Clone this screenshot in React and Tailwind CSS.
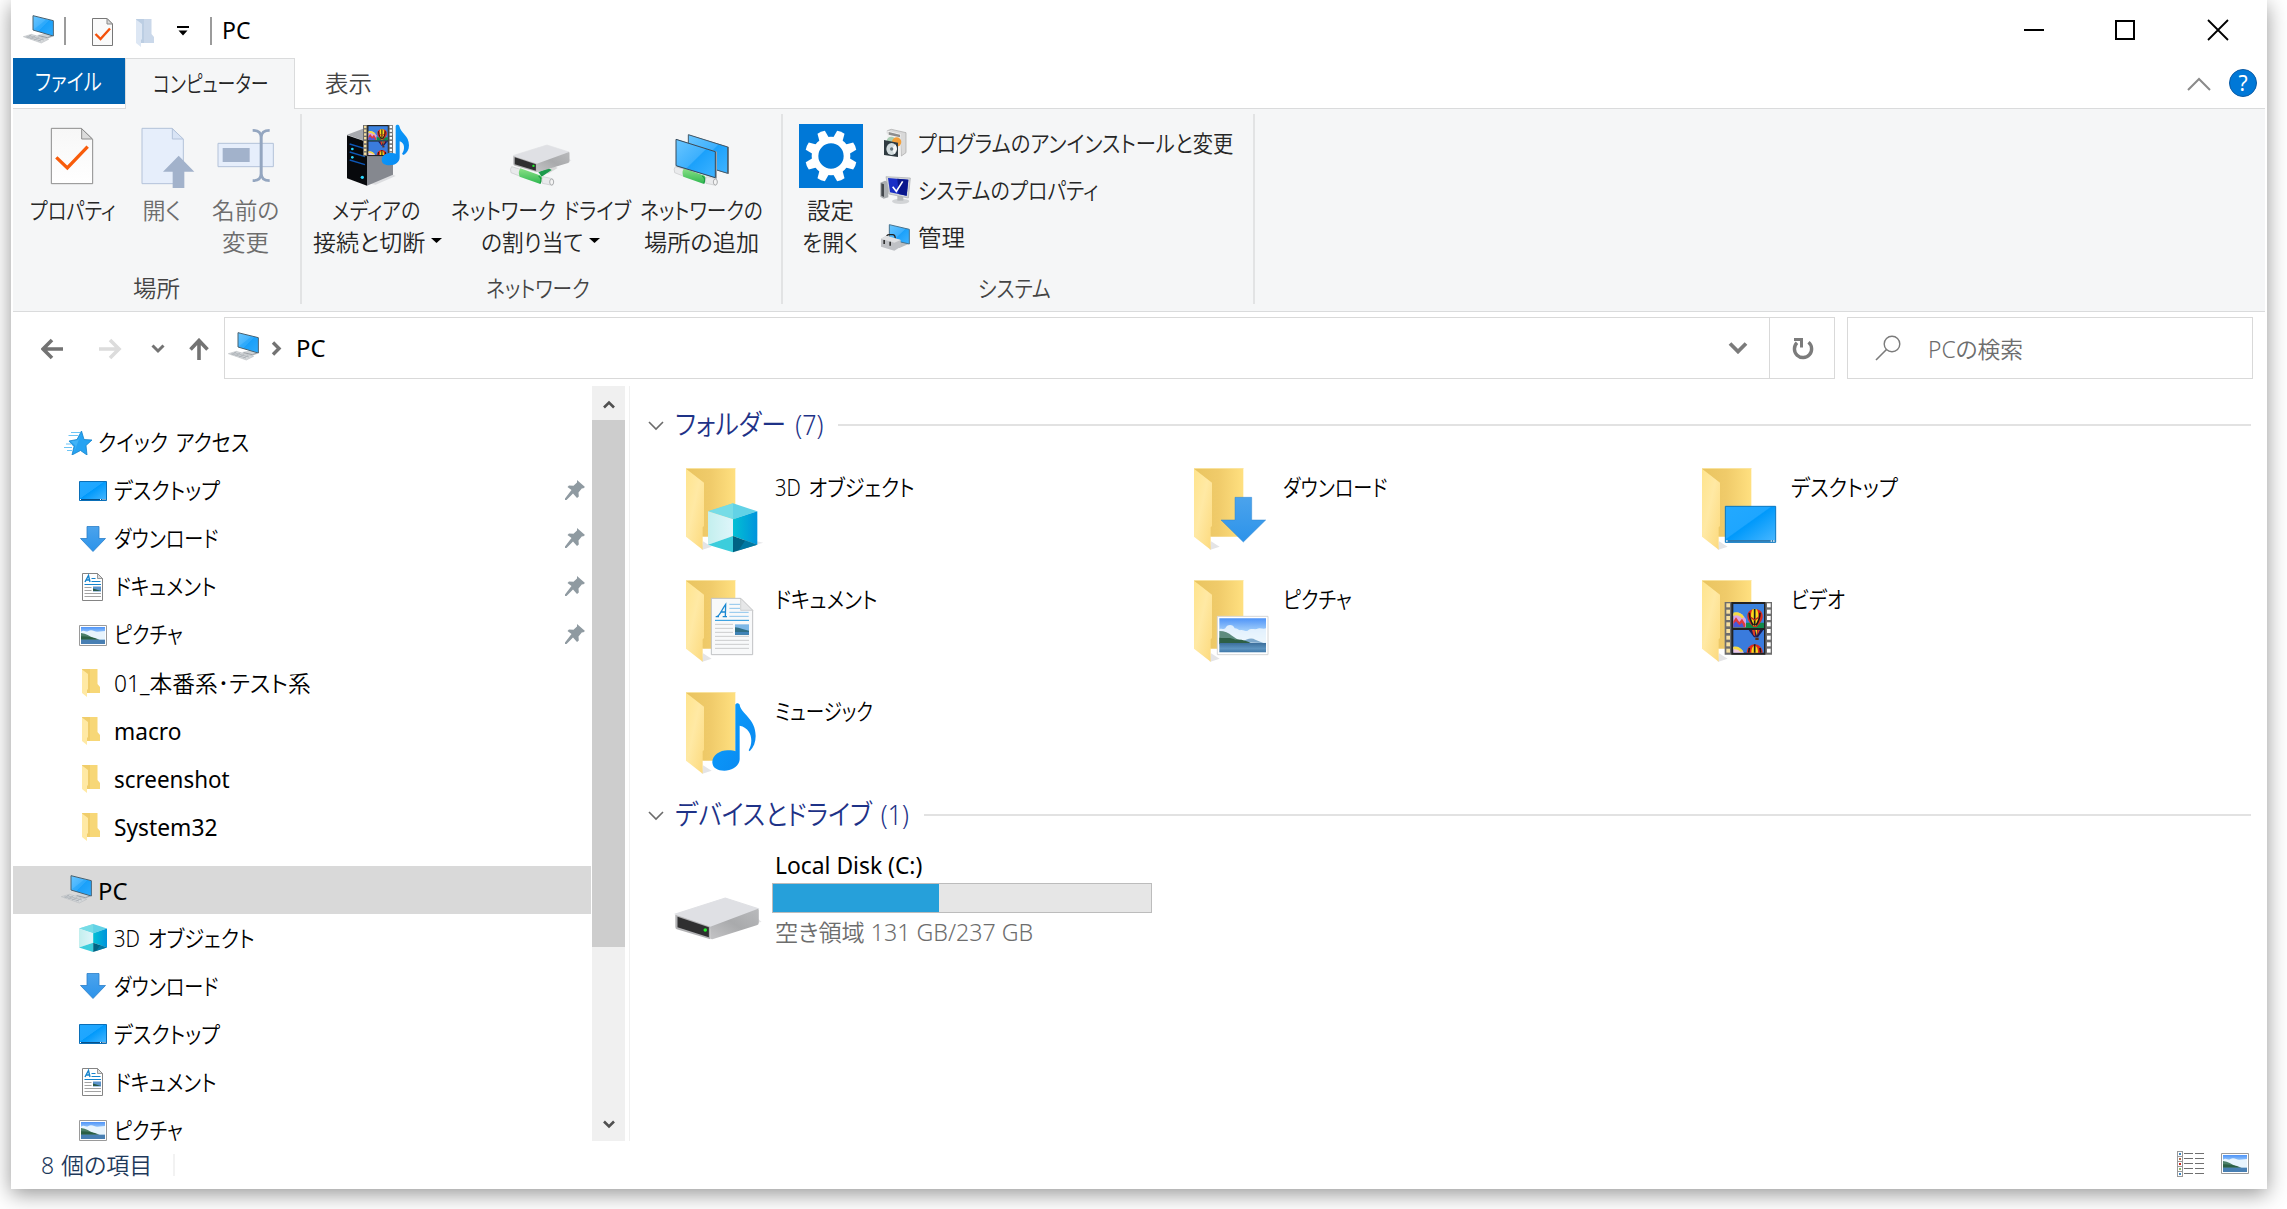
import { useLayoutEffect, useRef } from "react";

/* Text condensed or widened to fill the width of its box. */
function T({ className = "", children }) {
  const box = useRef(null);
  const inner = useRef(null);
  useLayoutEffect(() => {
    const natural = inner.current.offsetWidth;
    if (natural) inner.current.style.transform = `scaleX(${box.current.clientWidth / natural})`;
  }, [children]);
  return (
    <span ref={box} className={"block h-8 shrink-0 leading-[30px] " + className}>
      <span ref={inner} className="inline-block origin-left whitespace-nowrap">{children}</span>
    </span>
  );
}

/* ---------- shared drawings ---------- */

function Gradients() {
  return (
    <svg className="absolute h-0 w-0" aria-hidden="true">
      <defs>
        <linearGradient id="screen" x1="0" y1="0" x2="1" y2="1">
          <stop offset="0" stopColor="#6ac6ff" />
          <stop offset=".5" stopColor="#3db0fd" />
          <stop offset=".52" stopColor="#1ba1fb" />
          <stop offset="1" stopColor="#3fb3ff" />
        </linearGradient>
        <linearGradient id="desk" x1="0" y1="0" x2="1" y2="1">
          <stop offset="0" stopColor="#23a9ff" />
          <stop offset=".45" stopColor="#1ea6ff" />
          <stop offset=".47" stopColor="#0099fb" />
          <stop offset="1" stopColor="#4bb8ff" />
        </linearGradient>
        <linearGradient id="fback" x1="0" y1="0" x2="1" y2="0">
          <stop offset="0" stopColor="#e9c460" />
          <stop offset=".5" stopColor="#f0cb6a" />
          <stop offset="1" stopColor="#ffe080" />
        </linearGradient>
        <linearGradient id="ffront" x1="0" y1="0" x2="1" y2="1">
          <stop offset="0" stopColor="#ffe48d" />
          <stop offset=".45" stopColor="#ffe9a4" />
          <stop offset="1" stopColor="#fcd97c" />
        </linearGradient>
        <linearGradient id="sky" x1="0" y1="0" x2="0" y2="1">
          <stop offset="0" stopColor="#4f94f8" />
          <stop offset=".45" stopColor="#b5dcfb" />
          <stop offset=".7" stopColor="#e3f3fd" />
        </linearGradient>
        <linearGradient id="lake" x1="0" y1="0" x2="0" y2="1">
          <stop offset="0" stopColor="#3c6f9c" />
          <stop offset=".6" stopColor="#5d94c0" />
          <stop offset="1" stopColor="#3f78a8" />
        </linearGradient>
        <linearGradient id="cubeL" x1="0" y1="0" x2="1" y2="0">
          <stop offset="0" stopColor="#c3efee" />
          <stop offset="1" stopColor="#dff5fa" />
        </linearGradient>
        <linearGradient id="cubeR" x1="0" y1="0" x2="1" y2="0">
          <stop offset="0" stopColor="#02c0d4" />
          <stop offset="1" stopColor="#0093dc" />
        </linearGradient>
        <linearGradient id="arrow" x1="0" y1="0" x2="0" y2="1">
          <stop offset="0" stopColor="#4ba3ec" />
          <stop offset="1" stopColor="#2c93ea" />
        </linearGradient>
        <linearGradient id="diskSide" x1="0" y1="1" x2="1" y2="0">
          <stop offset="0" stopColor="#c4c4c6" />
          <stop offset=".5" stopColor="#a9aaac" />
          <stop offset="1" stopColor="#b9babc" />
        </linearGradient>
        <linearGradient id="note" x1="0" y1="0" x2="1" y2="1">
          <stop offset="0" stopColor="#0ba0ff" />
          <stop offset="1" stopColor="#0a86ee" />
        </linearGradient>
        <linearGradient id="paper" x1="0" y1="0" x2="0" y2="1">
          <stop offset="0" stopColor="#f7f7f7" />
          <stop offset="1" stopColor="#ffffff" />
        </linearGradient>
        <linearGradient id="green" x1="0" y1="0" x2="0" y2="1">
          <stop offset="0" stopColor="#8be086" />
          <stop offset="1" stopColor="#2fb850" />
        </linearGradient>
      </defs>
    </svg>
  );
}

function PcIcon({ className = "" }) {
  return (
    <svg className={"h-8 w-[34px] shrink-0 " + className} viewBox="66 42 102 96">
      <path d="M112 105l30-6 16 6v5l-17 7-26-6z" fill="#cfd3d6" />
      <path d="M116 107l26 6 14-5" fill="none" stroke="#9ba0a5" strokeWidth="3" />
      <path d="M70 110l24-7 52 15-22 11z" fill="#d5d8da" stroke="#b2b6ba" strokeWidth="1.5" />
      <path d="M79 110l44 13M87 107l45 13M94 105l-14 8M106 108l-15 8M118 112l-16 8M130 115l-15 8" stroke="#a5abb0" strokeWidth="2" />
      <path d="M99 47l61 15v46l-61-18z" fill="url(#screen)" stroke="#47606f" strokeWidth="3" />
      <path d="M102 88l38-30 18 6v42z" fill="#199ff8" opacity=".45" />
    </svg>
  );
}

function CheckDoc({ className }) {
  return (
    <svg className={className} viewBox="150 381 132 174">
      <path d="M154 385h90l34 33v133H154z" fill="url(#paper)" stroke="#8c8c8c" strokeWidth="3" />
      <path d="M245 386v31h32z" fill="#dcdcdc" stroke="#8c8c8c" strokeWidth="3" />
      <path d="M169 472l33 32 61-64" fill="none" stroke="#f85c0b" strokeWidth="10" />
    </svg>
  );
}

function MiniCheckDoc() {
  return (
    <svg className="h-[30px] w-[23px] shrink-0" viewBox="0 0 23 30">
      <path d="M1.5 1.5h14.5l5.500 5.500v21.500h-20z" fill="#fafafa" stroke="#777" />
      <path d="M16 1.500v5.500h5.500z" fill="#d9d9d9" stroke="#888" />
      <path d="M4.500 17l5 5L19 11.500" fill="none" stroke="#f4510b" strokeWidth="2.400" />
    </svg>
  );
}

function SmallFolder({ className = "", pale }) {
  return (
    <svg className={"shrink-0 " + className} viewBox="0 0 18 28">
      <path d="M0 0h15.500v15l2.500 3v6H0z" fill={pale ? "#cad8ea" : "#f7d777"} />
      <path d="M0 0h8v24H4z" fill={pale ? "#bccee3" : "#f0cd6b"} />
      <path d="M0 0.500l6 4.500v15l-1 1v7L0 24z" fill={pale ? "#dde7f4" : "#ffe9a4"} />
    </svg>
  );
}

/* Landscape picture on a 150 x 115 field */
function Landscape() {
  return (
    <g>
      <path d="M0 0h152v115H0z" fill="#fff" stroke="#d6d6d6" strokeWidth="3" />
      <path d="M6 6h140v102H6z" fill="url(#sky)" />
      <path d="M6 38c10-3 12 3 18-2 4-13 24-14 28 0 8 0 10 4 16 6 8-4 14 4 22 2 10-10 20-4 28-6 10-6 18 2 28-2v40H6z" fill="#eef7fd" opacity=".85" />
      <path d="M74 78c14-12 30-14 40-8l24 10z" fill="#7ea9cc" />
      <path d="M6 44c16 0 28 6 38 14 8 4 14 12 24 14l-20 12H6z" fill="#5d8c7e" />
      <path d="M6 64c20 2 34-2 48 6 18-2 36 4 50 12H6z" fill="#2d5f45" />
      <path d="M6 80h140v28H6z" fill="url(#lake)" />
    </g>
  );
}

function PictureSmall({ className = "" }) {
  return (
    <svg className={"h-[21px] w-7 shrink-0 " + className} viewBox="0 0 84 63">
      <path d="M1.500 1.500h81v60h-81z" fill="#fff" stroke="#9a9a9a" strokeWidth="3" />
      <path d="M6 6h72v51H6z" fill="url(#sky)" />
      <path d="M6 20c10-8 16 4 22-2 12-6 20 4 28 2l22-2v24H6z" fill="#e8f4fd" />
      <path d="M6 24c16 2 26 10 36 14l14 6H6z" fill="#4c7f69" />
      <path d="M6 34c20 0 36 2 56 10H6z" fill="#2b5f44" />
      <path d="M6 44h72v13H6z" fill="#487fb3" />
    </svg>
  );
}

function DesktopSmall() {
  return (
    <svg className="h-5 w-7 shrink-0" viewBox="0 0 28 20">
      <path d="M.5.5h27v19H.5z" fill="url(#desk)" stroke="#0a6fb8" />
      <path d="M1 18h26v1H1z" fill="#07508a" />
      <path d="M1 18h1v1H1zM21 18h1v1h-1zM23.500 18h1v1h-1zM25.500 18h1v1h-1z" fill="#fff" />
    </svg>
  );
}

function DownloadSmall() {
  return (
    <svg className="h-[27px] w-7 shrink-0" viewBox="0 0 28 27">
      <path d="M8 .5h12v12h6.500L14 25.500 1.500 12.500H8z" fill="url(#arrow)" stroke="#2b7fc9" strokeWidth=".8" />
    </svg>
  );
}

function DocSmall() {
  return (
    <svg className="h-7 w-7 shrink-0" viewBox="0 0 28 28">
      <path d="M3.500.5h15l5 5v22h-20z" fill="#fff" stroke="#848484" />
      <path d="M18.500.5v5h5z" fill="#ddd" stroke="#848484" strokeWidth=".8" />
      <path d="M6 9l3.500-6.500L11 9M7 7h4" fill="none" stroke="#1583cc" strokeWidth="1.400" />
      <path d="M12.500 5.500h4M12.500 8.500h9M5.500 11.500h16.500" stroke="#1583cc" strokeWidth="1.200" />
      <path d="M5.500 14.500h7M5.500 17.500h7M5.500 20.500h16.500M5.500 23.500h16.500" stroke="#a3a3a3" />
      <path d="M14 13.500h8v5h-8z" fill="#5a93cb" />
      <path d="M14 15.500l8 2.500h-8z" fill="#2a5a48" />
    </svg>
  );
}

/* Cube on the 3x canvas used by the folder drawings */
function Cube() {
  return (
    <g>
      <path d="M339 340l73 24-73 24-75-24z" fill="#62d2e6" />
      <path d="M339 340v48l-75-24z" fill="#7fe0e6" opacity=".7" />
      <path d="M264 364l75 24v50l-75 26z" fill="url(#cubeL)" />
      <path d="M339 388l73-24v100l-73-26z" fill="url(#cubeR)" />
      <path d="M264 464l75-26v49z" fill="#3ccddc" />
      <path d="M412 464l-73-26v49z" fill="#006384" />
      <path d="M412 464l-36-13-20 30z" fill="#0082b0" opacity=".7" />
    </g>
  );
}

function CubeSmall() {
  return (
    <svg className="h-7 w-7 shrink-0" viewBox="264 340 148 147" preserveAspectRatio="none">
      <Cube />
    </svg>
  );
}

function Star() {
  return (
    <svg className="h-6 w-7 shrink-0" viewBox="0 0 28 24">
      <path d="M17.500 0l2.500 8.500 8 .5-6 5.500 1 9.500-6.500-4.500-8.500 4.500 2-8.500-5-5.500 8-1.500z" fill="#27a3f2" stroke="#1283cc" strokeWidth=".8" />
      <path d="M17.500 2l-3.500 7-7 1.300 4.500 4.500-1.500 6.500z" fill="#5cc3fb" opacity=".5" />
      <path d="M7 1.500h9M4.500 4.500h10M2 13h5M0 16.500h8M3 19.500h5" stroke="#6cc4f5" strokeWidth="1" />
    </svg>
  );
}

function Pin() {
  return (
    <svg className="mb-[2px] h-5 w-5 shrink-0" viewBox="0 0 20 20">
      <path d="M12 0l8 7-2 1.500-1-.3-3.500 4.300.3 4-1.800 1.500-4-4.500L1.500 20H0v-1.500L6.500 10 2.500 7 4 5.500l4.500.3L12 2.500z" fill="#8f9aa1" />
    </svg>
  );
}

/* Film strip with balloons on a 142 x 158 field */
function Film() {
  const holes = [4, 23, 42, 61, 81, 101, 121, 140];
  return (
    <g>
      <path d="M0 0h142v158H0z" fill="#6d6d6d" />
      <path d="M20 0h102v158H20z" fill="#222" />
      {holes.map((y) => (
        <g key={y}>
          <rect x="5" y={y} width="11" height="12" fill="#f6dfa0" />
          <rect x="127" y={y} width="11" height="12" fill="#fff" />
        </g>
      ))}
      <path d="M26 6h92v72H26z" fill="#3b82de" />
      <path d="M26 84h92v68H26z" fill="#3a7bdd" />
      <path d="M60 62h58v16H26V68z" fill="#128a4b" />
      <path d="M26 36c14-10 26-4 38 16v24H26z" fill="#d8a4e4" />
      <path d="M26 32c14-4 24 2 32 12l-6 6c-8-10-16-12-26-8z" fill="#f3dc45" />
      <path d="M26 58l8-12 10 14 8-10 10 16v10H26z" fill="#df3a3c" />
      <path d="M26 66l8-8 10 12 8-8 6 14H26z" fill="#4859d8" />
      <path d="M68 42c0-28 46-28 46 0 0 14-10 24-18 33h-10c-8-9-18-19-18-33z" fill="#e0291d" />
      <path d="M84 22c-7 8-7 34 2 50h8c9-16 9-42 2-50-4-2-8-2-12 0z" fill="#f9d91c" />
      <path d="M90 21v50M74 32c0 12 4 26 12 38M106 32c0 12-4 26-12 38" fill="none" stroke="#1b1b1b" strokeWidth="5" />
      <path d="M78 46l12 8 12-8" fill="none" stroke="#c2261c" strokeWidth="4" />
      <path d="M72 84h44l-16 22h-12z" fill="#1c1c50" />
      <path d="M82 84h8l2 20-6-6zM98 84h8l-8 16z" fill="#e33b26" />
      <path d="M92 84h5l-1 18z" fill="#f9d91c" />
      <path d="M92 107h10v7H92z" fill="#5b2f16" />
      <path d="M26 136c12-4 22 2 32 16H26z" fill="#f0c8e0" />
      <path d="M26 134c14-2 22 4 30 14l-8 2c-6-6-12-10-22-8z" fill="#f3dc45" />
      <path d="M66 152c2-34 46-34 48 0z" fill="#e0291d" />
      <path d="M80 152c0-28 20-28 20 0z" fill="#f9d91c" />
      <path d="M90 127v25M74 138l-2 14M106 138l2 14" stroke="#1b1b1b" strokeWidth="5" />
    </g>
  );
}

function BigFolder({ kind }) {
  return (
    <svg className="h-[86px] w-20 shrink-0" viewBox="198 234 240 258">
      <path d="M245 480l30-10-26-16z" fill="#e4e4e6" />
      {kind === "cube" && <path d="M408 464l22-6-20-4z" fill="#e8e8ea" />}
      <path d="M198 234h148v206h-98l-50-20z" fill="url(#fback)" />
      <path d="M198 235h148" stroke="#fbe7a9" strokeWidth="3" />
      <path d="M198 236l54 42v130l-4 4v67l-50-39z" fill="url(#ffront)" />
      {kind === "cube" && <Cube />}
      {kind === "download" && (
        <path transform="translate(96 150)" d="M225 172h50v68h42l-67 66-67-66h42z" fill="url(#arrow)" stroke="#2f86d3" strokeWidth="1.500" />
      )}
      {kind === "desktop" && (
        <g transform="translate(102 150)">
          <path d="M166 199h151v108H166z" fill="url(#desk)" stroke="#0a76c0" strokeWidth="3" />
          <path d="M168 300h148v5H168z" fill="#2f78ad" />
          <path d="M168 301h5v4h-5zM302 301h4v4h-4zM309 301h5v4h-5z" fill="#d8ecfa" />
        </g>
      )}
      {kind === "doc" && (
        <g transform="translate(0 -336)">
          <path d="M274 625h88l36 36v133H274z" fill="#f8f9fa" stroke="#bfc1c3" strokeWidth="3" />
          <path d="M362 625v36h36z" fill="#e6e7e8" stroke="#bfc1c3" strokeWidth="2" />
          <path d="M289 680c10 0 14-18 28-37l-1 37m-8 0h13m-34 0h10m4-14h16" fill="none" stroke="#1a88d2" strokeWidth="4" />
          <path d="M328 643h32M328 655h32M328 667h58M328 679h58" stroke="#8cc4ec" strokeWidth="3" />
          <path d="M285 691h102" stroke="#1a92dc" strokeWidth="3" />
          <path d="M285 703h54M285 715h54M285 727h54M285 739h102M285 751h102M285 763h102M285 775h102" stroke="#cbcccd" strokeWidth="3" />
          <path d="M345 703h42v31h-42z" fill="#7db7e6" />
          <path d="M345 712c14 0 26 8 42 10v12h-42z" fill="#2f6e86" />
          <path d="M345 726h42v8h-42z" fill="#3f83b8" />
        </g>
      )}
      {kind === "picture" && (
        <g transform="translate(268 343)">
          <Landscape />
        </g>
      )}
      {kind === "video" && (
        <g transform="translate(266 300)">
          <Film />
        </g>
      )}
      {kind === "music" && (
        <path
          transform="translate(0 -672)"
          d="M346 944c2-6 10-6 13 0 4 28 48 40 48 94 0 18-6 34-18 46l-3-3c14-22 12-66-27-74v100c0 20-22 35-46 35-20 0-36-8-36-26 0-22 26-37 50-35 8 0 14 1 19 3z"
          fill="url(#note)"
        />
      )}
    </svg>
  );
}

/* Drive on the 3x canvas: 230 x 126 field */
function Drive() {
  return (
    <g>
      <path d="M218 76l24-4-10-10z" fill="#e6e6e8" />
      <path d="M0 48L140 0l92 32-135 60z" fill="#dfe0e4" stroke="#dfe0e4" strokeWidth="3" />
      <path d="M98 86L232 32q3 2 2 8v34q0 6-6 8L104 124q-6 0-6-4z" fill="url(#diskSide)" />
      <path d="M0 50l98 36v38L4 94q-4-2-4-8z" fill="#b1b1b3" />
      <path d="M6 56l88 32v30L6 88z" fill="#2f2f30" />
      <circle cx="84" cy="96" r="5" fill="#23ef2b" />
    </g>
  );
}

function Pipe({ tee }) {
  return (
    <g>
      {tee && <path d="M770 212l22-14 10 6-30 18z" fill="#d7d7d7" />}
      {tee && <path d="M744 216l30-12 10 6-30 20z" fill="#1c9a4c" />}
      <path d="M664 200q-6 6-2 18l28 11 4-20z" fill="#e9eaec" stroke="#c5c7c9" strokeWidth="2" />
      <path d="M690 205l62 22q8 10-4 24l-60-21q-6-14 2-25z" fill="url(#green)" />
      <path d="M745 228q12 8 4 23" fill="none" stroke="#1d9a45" strokeWidth="4" />
      <path d="M758 230l28 6q8 8 0 20l-30-6q-4-12 2-20z" fill="#e9eaec" stroke="#c5c7c9" strokeWidth="2" />
      <ellipse cx="784" cy="246" rx="6" ry="9" fill="#f4f4f4" stroke="#aeb0b2" strokeWidth="3" />
    </g>
  );
}

function OpenIcon() {
  return (
    <svg className="h-16 w-16" viewBox="391 372 192 192">
      <path d="M424 385h90l34 33v133H424z" fill="#e6eefb" stroke="#b3c2d9" strokeWidth="3" />
      <path d="M515 386v31h33z" fill="#d9e4f5" stroke="#b3c2d9" strokeWidth="3" />
      <path d="M534 467l47 48h-30v49h-35v-49h-29z" fill="#a2b2cb" />
    </svg>
  );
}

function RenameIcon() {
  return (
    <svg className="h-16 w-16" viewBox="640 372 192 192">
      <path d="M655 430h166v70H655z" fill="#e6eefb" stroke="#b3c2d9" strokeWidth="3" />
      <path d="M669 444h81v42h-81z" fill="#a2b2cb" />
      <path d="M759 391c16 0 25 5 25 20v110c0 15-9 21-25 21M810 391c-16 0-25 5-25 20v110c0 15 9 21 25 21" fill="none" stroke="#94a6c0" strokeWidth="8" />
    </svg>
  );
}

function MediaIcon() {
  return (
    <svg className="h-16 w-16" viewBox="165 72 192 192">
      <path d="M228 250l78-26 8 4-60 26z" fill="#dcdde0" />
      <path d="M168 104l60-22 78 22-76 22z" fill="#a7a9ae" />
      <path d="M168 106l60 20v131l-60-22z" fill="#07090c" />
      <path d="M228 126l78-22v120l-78 33z" fill="#85888f" />
      <path d="M176 132l46 14M176 156l46 14M176 180l46 14" stroke="#0d56b4" strokeWidth="4" />
      <circle cx="184" cy="147" r="4" fill="#2ad7ff" />
      <circle cx="184" cy="172" r="4" fill="#2ad7ff" />
      <circle cx="214" cy="232" r="5" fill="#2ad7ff" />
      <g transform="translate(216 75) scale(.63 .59)">
        <Film />
      </g>
      <path d="M314 78c2-5 9-5 11 0 4 22 29 28 29 58 0 14-6 23-16 29l-5-3c10-14 8-34-7-38v48c0 14-12 24-30 24-14 0-24-6-24-17 0-14 16-22 32-20 4 0 7 1 10 2z" fill="url(#note)" />
    </svg>
  );
}

function NetDriveIcon() {
  return (
    <svg className="h-16 w-16" viewBox="656 72 192 192">
      <Pipe tee />
      <g transform="translate(669 135) scale(.72 .655)">
        <Drive />
      </g>
    </svg>
  );
}

function NetPlaceIcon() {
  return (
    <svg className="h-16 w-16" viewBox="1140 72 192 192">
      <g transform="translate(495 0)">
        <Pipe />
      </g>
      <path d="M1200 104l120 37v81l-120-36z" fill="#7f858a" />
      <path d="M1198 104l118 37v79l-118-36z" fill="url(#screen)" stroke="#42596a" strokeWidth="3" />
      <path d="M1164 118l120 37v81l-120-36z" fill="#9fa4a8" />
      <path d="M1161 118l118 37v78l-118-36z" fill="url(#screen)" stroke="#354a5c" strokeWidth="3" />
    </svg>
  );
}

function SettingsIcon() {
  const teeth = [22.5, 67.5, 112.5, 157.5, 202.5, 247.5, 292.5, 337.5];
  return (
    <svg className="h-16 w-16" viewBox="0 0 192 192">
      <path d="M0 0h192v192H0z" fill="#0078d7" />
      <circle cx="96" cy="96" r="48" fill="none" stroke="#fff" strokeWidth="20" />
      {teeth.map((a) => (
        <path key={a} transform={`rotate(${a} 96 96)`} d="M81 42l3-23q12-3 24 0l3 23z" fill="#fff" />
      ))}
    </svg>
  );
}

function UninstallIcon() {
  return (
    <svg className="h-8 w-8 shrink-0" viewBox="297 84 96 96">
      <path d="M322 92l12-4 44 10v60l-14 10-4-62-38-6z" fill="#d9d9d9" stroke="#a5a5a5" strokeWidth="2" />
      <path d="M322 92l40 10v66l-40-6z" fill="#f1f1f1" />
      <path d="M326 96l34 8v8l-34-8z" fill="#8d8d8d" />
      <circle cx="334" cy="124" r="14" fill="#a9cdb2" />
      <circle cx="350" cy="126" r="14" fill="#f3a03a" />
      <path d="M312 120l42 8v43l-42-6z" fill="#2f3a40" />
      <ellipse cx="335" cy="147" rx="16" ry="18" fill="#d3dcde" />
      <path d="M335 147l12-14 4 14-8 14z" fill="#fff" opacity=".8" />
      <circle cx="335" cy="147" r="5" fill="#66757b" />
    </svg>
  );
}

function SystemIcon() {
  return (
    <svg className="h-8 w-8 shrink-0" viewBox="297 227 96 96">
      <path d="M301 250l14-6 10 4v46l-14 4-10-6z" fill="#a9adb0" />
      <path d="M304 252l8 3v38l-8-4z" fill="#44484c" />
      <ellipse cx="362" cy="306" rx="26" ry="8" fill="#d2d4d6" />
      <path d="M352 288h18v16h-18z" fill="#b7babd" />
      <path d="M318 232l73 4-6 60-58-12z" fill="#d5d7d9" stroke="#a8abad" strokeWidth="2" />
      <path d="M324 236l61 5-5 48-50-10z" fill="#1a2fc6" />
      <path d="M352 238l33 3-5 48-24-5z" fill="#0a178c" />
      <path d="M338 262l11 14 19-30" fill="none" stroke="#fff" strokeWidth="5" />
    </svg>
  );
}

function ManageIcon() {
  return (
    <svg className="h-8 w-8 shrink-0" viewBox="297 366 96 96">
      <path d="M340 428l46-4v8l-28 12z" fill="#b9bdc0" />
      <path d="M328 374l60 14v44l-60-14z" fill="url(#screen)" stroke="#46738f" strokeWidth="3" />
      <path d="M318 416q0-12 10-12h10q8 0 8 14" fill="none" stroke="#222" strokeWidth="4" />
      <path d="M303 416l16-9 43 13v20l-19 12-40-12z" fill="#bfc1c5" />
      <path d="M303 416l40 12 19-8-43-13z" fill="#dfe0e2" />
      <path d="M310 420h5v12h-5zM328 425h5v12h-5z" fill="#333" />
    </svg>
  );
}

function Chevron({ className, d = "M1 2l7 7 7-7", box = "0 0 16 11", width = 2, stroke = "#7b7b7b" }) {
  return (
    <svg className={"shrink-0 " + className} viewBox={box}>
      <path d={d} fill="none" stroke={stroke} strokeWidth={width} />
    </svg>
  );
}

const Caret = () => (
  <svg className="mb-[5px] h-[5px] w-[11px] shrink-0" viewBox="0 0 11 5">
    <path d="M0 0h11L5.500 5z" fill="#000" />
  </svg>
);

/* ---------- ribbon ---------- */

function BigButton({ className, icon, children }) {
  return (
    <div className={"flex shrink-0 flex-col items-center " + className}>
      <div className="mb-[7px] flex h-16 w-16 items-center justify-center">{icon}</div>
      {children}
    </div>
  );
}

function Ribbon() {
  return (
    <div className="flex h-[204px] border-y border-[#dadbdc] bg-[#f5f6f7] pt-[5px] text-[#262626]">
      <section className="h-[190px] w-[289px] shrink-0 border-r-2 border-[#e2e3e4]">
        <div className="flex h-[159px] pl-[14px] pt-[10px]">
          <BigButton className="w-[90px]" icon={<CheckDoc className="h-[58px] w-11" />}>
            <T className="ml-px w-[86px]">プロパティ</T>
          </BigButton>
          <BigButton className="ml-[14px] w-[60px] text-[#6d6d6d]" icon={<div className="ml-1"><OpenIcon /></div>}>
            <T className="ml-[2px] w-[39px]">開く</T>
          </BigButton>
          <BigButton className="ml-[17px] w-[74px] text-[#6d6d6d]" icon={<RenameIcon />}>
            <T className="w-[67px]">名前の</T>
            <T className="w-[47px]">変更</T>
          </BigButton>
        </div>
        <div className="flex justify-center text-[#444]">
          <T className="mr-px w-[47px]">場所</T>
        </div>
      </section>
      <section className="h-[190px] w-[481px] shrink-0 border-r-2 border-[#e2e3e4]">
        <div className="flex h-[159px] pl-[6px] pt-[10px]">
          <BigButton className="w-[139px]" icon={<MediaIcon />}>
            <T className="mr-[3px] w-[88px]">メディアの</T>
            <div className="flex items-center gap-[6px]">
              <T className="w-[112px]">接続と切断</T>
              <Caret />
            </div>
          </BigButton>
          <BigButton className="w-[187px]" icon={<NetDriveIcon />}>
            <T className="w-[180px]">ネットワーク ドライブ</T>
            <div className="flex items-center gap-[6px]">
              <T className="w-[102px]">の割り当て</T>
              <Caret />
            </div>
          </BigButton>
          <BigButton className="ml-px w-[132px]" icon={<NetPlaceIcon />}>
            <T className="w-[123px]">ネットワークの</T>
            <T className="w-[115px]">場所の追加</T>
          </BigButton>
        </div>
        <div className="flex justify-center pr-[7px] text-[#444]">
          <T className="w-[104px]">ネットワーク</T>
        </div>
      </section>
      <section className="h-[190px] w-[472px] shrink-0 border-r-2 border-[#e2e3e4]">
        <div className="flex h-[159px] pl-[10px]">
          <BigButton className="w-[76px] pt-[10px]" icon={<SettingsIcon />}>
            <T className="mr-[2px] w-[47px]">設定</T>
            <T className="mr-px w-[57px]">を開く</T>
          </BigButton>
          <div className="ml-[10px] flex flex-col pt-[6px]">
            <div className="flex h-[47px] items-center gap-[7px]">
              <UninstallIcon />
              <T className="w-[315px]">プログラムのアンインストールと変更</T>
            </div>
            <div className="flex h-[47px] items-center gap-[7px]">
              <SystemIcon />
              <T className="w-[180px]">システムのプロパティ</T>
            </div>
            <div className="flex h-[47px] items-center gap-[7px]">
              <ManageIcon />
              <T className="w-[47px]">管理</T>
            </div>
          </div>
        </div>
        <div className="flex justify-center pr-[8px] text-[#444]">
          <T className="w-[73px]">システム</T>
        </div>
      </section>
    </div>
  );
}

/* ---------- navigation pane ---------- */

function NavRow({ icon, pinned, children }) {
  return (
    <div className="flex h-12 shrink-0 items-center pl-[66px] pr-[7px]">
      {icon}
      <div className="ml-[7px] flex-1">{children}</div>
      {pinned && <Pin />}
    </div>
  );
}

const folderIcon = <SmallFolder className="ml-[3px] mr-[7px] h-7 w-[18px]" />;

function NavPane() {
  return (
    <aside className="flex h-[755px] w-[579px] shrink-0 flex-col overflow-hidden pt-[33px]">
      <div className="flex h-12 shrink-0 items-center pl-[51px]">
        <Star />
        <T className="ml-[6px] w-[151px]">クイック アクセス</T>
      </div>
      <NavRow pinned icon={<DesktopSmall />}><T className="w-[106px]">デスクトップ</T></NavRow>
      <NavRow pinned icon={<DownloadSmall />}><T className="w-[104px]">ダウンロード</T></NavRow>
      <NavRow pinned icon={<DocSmall />}><T className="ml-px w-[101px]">ドキュメント</T></NavRow>
      <NavRow pinned icon={<PictureSmall />}><T className="w-[69px]">ピクチャ</T></NavRow>
      <NavRow icon={folderIcon}><T className="mt-px w-[197px]">01_本番系･テスト系</T></NavRow>
      <NavRow icon={folderIcon}><T className="mt-[2px] w-[67px] font-normal">macro</T></NavRow>
      <NavRow icon={folderIcon}><T className="mt-[2px] w-[116px] font-normal">screenshot</T></NavRow>
      <NavRow icon={folderIcon}><T className="mt-[2px] w-[103px] font-normal">System32</T></NavRow>
      <div className="mt-[15px] flex h-12 w-[578px] shrink-0 items-center bg-[#d9d9d9] pl-[47px]">
        <PcIcon />
        <T className="ml-[4px] mt-[4px] w-[29px] font-normal">PC</T>
      </div>
      <NavRow icon={<CubeSmall />}><T className="mt-[2px] w-[141px]">3D オブジェクト</T></NavRow>
      <NavRow icon={<DownloadSmall />}><T className="mt-[2px] w-[104px]">ダウンロード</T></NavRow>
      <NavRow icon={<DesktopSmall />}><T className="mt-[2px] w-[106px]">デスクトップ</T></NavRow>
      <NavRow icon={<DocSmall />}><T className="ml-px mt-[2px] w-[101px]">ドキュメント</T></NavRow>
      <NavRow icon={<PictureSmall />}><T className="mt-[2px] w-[69px]">ピクチャ</T></NavRow>
    </aside>
  );
}

function Scrollbar() {
  return (
    <div className="flex h-[755px] w-[33px] shrink-0 flex-col items-center bg-[#f0f0f0]">
      <div className="flex h-[34px] items-center pt-[3px]">
        <Chevron className="h-[9px] w-3" box="0 0 12 9" d="M1 7.500l5-5 5 5" width={2.6} stroke="#505050" />
      </div>
      <div className="h-[527px] w-[33px] bg-[#cdcdcd]" />
      <div className="flex-1" />
      <div className="flex h-[34px] items-center">
        <Chevron className="h-[9px] w-3" box="0 0 12 9" d="M1 1.500l5 5 5-5" width={2.6} stroke="#505050" />
      </div>
    </div>
  );
}

/* ---------- content ---------- */

function GroupHeader({ children }) {
  return (
    <div className="flex h-9 items-center text-[28px] text-[#1e3287]">
      <Chevron className="mr-[11px] h-[11px] w-4" width={1.6} stroke="#6b6b6b" />
      {children}
      <div className="h-[2px] flex-1 bg-[#e2e2e2]" />
    </div>
  );
}

function Tile({ kind, children }) {
  return (
    <div className="flex h-28">
      <BigFolder kind={kind} />
      <div className="ml-[9px] pt-1">{children}</div>
    </div>
  );
}

function Content() {
  return (
    <main className="flex-1 pl-[18px] pr-[14px] pt-[21px]">
      <GroupHeader><T className="mr-[15px] w-[148px]">フォルダー (7)</T></GroupHeader>
      <div className="ml-[38px] mt-[25px] grid grid-cols-[508px_508px_508px]">
        <Tile kind="cube"><T className="w-[140px]">3D オブジェクト</T></Tile>
        <Tile kind="download"><T className="w-[104px]">ダウンロード</T></Tile>
        <Tile kind="desktop"><T className="w-[107px]">デスクトップ</T></Tile>
        <Tile kind="doc"><T className="w-[102px]">ドキュメント</T></Tile>
        <Tile kind="picture"><T className="w-[69px]">ピクチャ</T></Tile>
        <Tile kind="video"><T className="w-[54px]">ビデオ</T></Tile>
        <Tile kind="music"><T className="w-[98px]">ミュージック</T></Tile>
      </div>
      <div className="-mt-[7px]">
        <GroupHeader><T className="mr-[15px] w-[234px]">デバイスとドライブ (1)</T></GroupHeader>
      </div>
      <div className="mt-[17px] flex pl-[26px]">
        <svg className="mt-[47px] h-[45px] w-[88px]" viewBox="-4 -3 264 135">
          <g transform="scale(1.070 1)"><Drive /></g>
        </svg>
        <div className="ml-[10px] [word-spacing:0px]">
          <T className="ml-[3px] w-[147px] font-normal">Local Disk (C:)</T>
          <div className="mt-px h-[30px] w-[380px] border border-[#bcbcbc] bg-[#e6e6e6]">
            <div className="h-full w-[44%] bg-[#26a0da]" />
          </div>
          <T className="ml-[3px] mt-[4px] w-[258px] text-[#6d6d6d]">空き領域 131 GB/237 GB</T>
        </div>
      </div>
    </main>
  );
}

/* ---------- window ---------- */

function TitleBar() {
  return (
    <header className="flex h-[58px] items-center pb-[2px] pt-[6px]">
      <PcIcon className="mb-[2px] ml-[9px]" />
      <div className="ml-[8px] h-7 w-[2px] bg-[#9b9b9b]" />
      <div className="ml-[25px] mt-[2px]"><MiniCheckDoc /></div>
      <SmallFolder pale className="ml-[21px] mt-[4px] h-7 w-5" />
      <svg className="ml-[22px] h-[10px] w-3" viewBox="0 0 12 10">
        <path d="M0 0h12v2H0zM1.500 4.500h9L6 9.500z" fill="#000" />
      </svg>
      <div className="ml-[21px] h-7 w-[2px] bg-[#9b9b9b]" />
      <T className="ml-[10px] w-[28px] font-normal">PC</T>
      <div className="flex-1" />
      <svg className="mb-[2px] h-6 w-[208px]" viewBox="0 0 208 24">
        <path d="M2 12h20" stroke="#000" strokeWidth="2" />
        <path d="M94 3h18v18H94z" fill="none" stroke="#000" strokeWidth="2" />
        <path d="M186 2l20 20M206 2l-20 20" stroke="#000" strokeWidth="1.800" />
      </svg>
      <div className="w-[35px]" />
    </header>
  );
}

function Tabs() {
  return (
    <nav className="flex h-[50px] items-start text-[#262626]">
      <div className="flex h-[46px] w-28 items-center justify-center bg-[#0063b1] text-white">
        <T className="mr-[2px] mt-[2px] w-[67px]">ファイル</T>
      </div>
      <div className="relative z-10 flex h-[51px] w-[170px] items-center justify-center border border-b-0 border-[#dadbdc] bg-[#f5f6f7]">
        <T className="ml-px w-[116px]">コンピューター</T>
      </div>
      <T className="ml-[30px] mt-[10px] w-[47px] text-[#444]">表示</T>
      <div className="flex-1" />
      <Chevron className="mt-[19px] h-[14px] w-6" box="0 0 24 14" d="M1 13L12 2l11 11" width={2} stroke="#8a8a8a" />
      <div className="ml-[18px] mr-[8px] mt-[11px] flex h-7 w-7 items-center justify-center rounded-full border border-[#0a5aa5] bg-[#0078d7] text-[21px] font-normal leading-none text-white">?</div>
    </nav>
  );
}

function AddressBar() {
  return (
    <div className="flex h-[74px] items-start pt-[5px]">
      <div className="flex h-[63px] w-[211px] items-center">
        <svg className="ml-7 h-[22px] w-[168px]" viewBox="0 0 168 22">
          <g fill="none" strokeWidth="3.600">
            <path d="M22 11H3M11 2l-9 9 9 9" stroke="#737373" />
            <path d="M58 11h19M69 2l9 9-9 9" stroke="#dcdcdc" />
            <path d="M111.500 7.500l5.500 5.500 5.500-5.500" stroke="#737373" strokeWidth="3" />
            <path d="M158 22V3M149.500 11.500l8.500-9 8.500 9" stroke="#737373" />
          </g>
        </svg>
      </div>
      <div className="flex h-[62px] w-[1611px] border border-[#d9d9d9]">
        <div className="flex flex-1 items-center">
          <PcIcon className="ml-[2px] -mt-[2px]" />
          <Chevron className="ml-[10px] h-[15px] w-[11px]" box="0 0 11 15" d="M2 1.500l6 6-6 6" width={3.4} stroke="#737373" />
          <T className="ml-[14px] mt-[2px] w-[29px] font-normal">PC</T>
          <div className="flex-1" />
          <Chevron className="mr-[21px] h-3 w-5" box="0 0 20 12" d="M2 1.500l8 8 8-8" width={3.8} stroke="#7b7b7b" />
        </div>
        <div className="flex w-[65px] items-center justify-center border-l border-[#d9d9d9]">
          <svg className="ml-px h-6 w-[22px]" viewBox="0 0 22 24">
            <path d="M16.500 6.300A8.600 8.600 0 1 1 5 6.800" fill="none" stroke="#7b7b7b" strokeWidth="3.400" />
            <path d="M2 3.500h7.500v8" fill="none" stroke="#7b7b7b" strokeWidth="3" />
          </svg>
        </div>
      </div>
      <div className="ml-3 flex h-[62px] w-[406px] items-center border border-[#d9d9d9]">
        <svg className="ml-[27px] h-[26px] w-[26px]" viewBox="0 0 26 26">
          <circle cx="17" cy="9" r="7.800" fill="none" stroke="#7b7b7b" strokeWidth="1.400" />
          <path d="M11.500 14.500L1 25" stroke="#7b7b7b" strokeWidth="1.600" />
        </svg>
        <T className="ml-[27px] mt-[3px] w-[95px] text-[#6d6d6d]">PCの検索</T>
      </div>
    </div>
  );
}

function DetailsIcon() {
  const rows = [
    [0, "#3f87c0"],
    [5, "#b06a4a"],
    [10, "#c8281e"],
    [15, "#8fb36a"],
    [20, "#3f87c0"],
  ];
  return (
    <svg className="mb-[3px] h-[26px] w-[27px] shrink-0" viewBox="0 0 27 26">
      {rows.map(([y, c]) => (
        <g key={y}>
          <rect x=".5" y={y + 0.5} width="5" height="5" fill="#fff" stroke="#999" />
          <rect x="2" y={y + 2} width="2" height="2" fill={c} />
          <path d={`M7 ${y + 2.5}h9M18 ${y + 2.5}h9`} stroke="#6f6f6f" />
        </g>
      ))}
    </svg>
  );
}

function StatusBar() {
  return (
    <footer className="flex h-12 items-center text-[#1e395b]">
      <T className="ml-[28px] mt-px w-[111px] [word-spacing:1px]">8 個の項目</T>
      <div className="ml-[21px] h-[22px] w-[2px] bg-[#f2f2f2]" />
      <div className="flex-1" />
      <DetailsIcon />
      <PictureSmall className="mb-[3px] ml-[17px] mr-[16px]" />
    </footer>
  );
}

export default function App() {
  return (
    <div
      lang="ja"
      className="h-[1209px] w-[2287px] overflow-hidden bg-white pl-[11px] font-['Noto_Sans','Noto_Sans_CJK_JP',sans-serif] text-[23px] font-[350] text-black [font-feature-settings:'palt'] [word-spacing:3px]"
    >
      <Gradients />
      <div className="h-[1189px] w-[2256px] bg-white px-[2px] shadow-[0_5px_20px_rgba(0,0,0,0.42)]">
        <TitleBar />
        <Tabs />
        <Ribbon />
        <AddressBar />
        <div className="flex h-[755px]">
          <NavPane />
          <Scrollbar />
          <div className="ml-[4px] w-px bg-[#f0f0f0]" />
          <Content />
        </div>
        <StatusBar />
      </div>
    </div>
  );
}
